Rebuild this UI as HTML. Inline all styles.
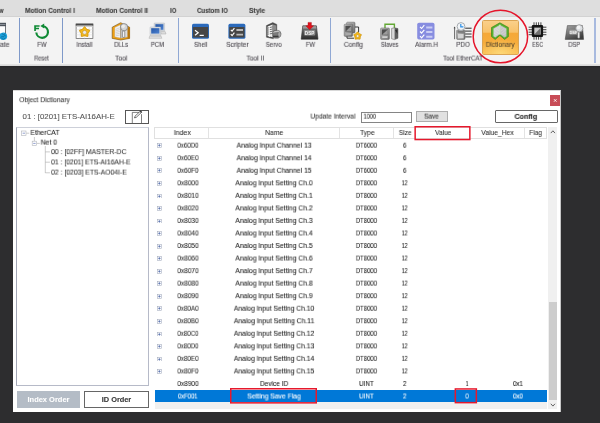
<!DOCTYPE html>
<html>
<head>
<meta charset="utf-8">
<style>
*{margin:0;padding:0;box-sizing:border-box;}
html,body{width:600px;height:423px;overflow:hidden;background:#2d2d2f;}
body{font-family:"Liberation Sans",sans-serif;position:relative;color:#333;}
.abs{position:absolute;}
#tabs{left:0;top:0;width:600px;height:17px;background:#dedede;border-bottom:1px solid #d2d2d2;}
#ribbon{left:0;top:17px;width:600px;height:47px;background:#f3f3f3;}
#ribline{left:0;top:64px;width:600px;height:4px;background:linear-gradient(#e6e6e6 0,#d8d8d8 1.6px,#8a8a8a 2px,#28282a 2.2px,#28282a 3px,#2d2d2f 4px);}
.sep{position:absolute;top:18.3px;width:1.1px;height:45px;background:#7f99c9;}
#dlg{left:12.6px;top:90.4px;width:548.6px;height:321.7px;background:#fff;border-right:1px solid #c6c6c6;border-top:1px solid #d8d8d8;}
.t{position:absolute;-webkit-text-stroke:0.08px currentColor;white-space:pre;font-size:6.9px;line-height:8px;color:#333;transform-origin:50% 50%;will-change:transform;}
</style>
</head>
<body>
<div id="tabs" class="abs"></div><div id="ribbon" class="abs"></div><div id="ribline" class="abs"></div>
<div class="sep" style="left:19px"></div>
<div class="sep" style="left:61.8px"></div>
<div class="sep" style="left:177.9px;background:#90a8d4"></div>
<div class="sep" style="left:329.9px;background:#90a8d4"></div>
<div class="sep" style="left:594.4px;width:1.6px;background:#a8badf"></div>
<div class="abs" style="left:481.5px;top:19.6px;width:37.4px;height:35.1px;border:1px solid #dba553;border-radius:1.5px;background:radial-gradient(ellipse 70% 45% at 50% 100%,#fdd877 0%,rgba(253,216,119,0) 100%),linear-gradient(#fad08a 0%,#f8c26a 34%,#f5a838 37%,#f6ad3d 70%,#f8b84a 100%);"></div>
<svg class="abs" style="left:0;top:0;width:600px;height:66px;will-change:transform" viewBox="0 0 600 66">
<defs>
<linearGradient id="gGray" x1="0" y1="0" x2="0" y2="1"><stop offset="0" stop-color="#7e7e7e"/><stop offset="1" stop-color="#2c2c2c"/></linearGradient>
<linearGradient id="gGray2" x1="0" y1="0" x2="1" y2="1"><stop offset="0" stop-color="#c8c8c8"/><stop offset="1" stop-color="#6a6a6a"/></linearGradient>
<linearGradient id="gBlue" x1="0" y1="0" x2="1" y2="1"><stop offset="0" stop-color="#2457a8"/><stop offset="1" stop-color="#4f82cf"/></linearGradient>
<linearGradient id="gOr" x1="0" y1="0" x2="0" y2="1"><stop offset="0" stop-color="#f3a83a"/><stop offset="1" stop-color="#d98512"/></linearGradient>
<linearGradient id="gGray3" x1="0" y1="0" x2="0.6" y2="1"><stop offset="0" stop-color="#a6a6a6"/><stop offset="1" stop-color="#3e3e3e"/></linearGradient>
</defs>
<!-- partial update icon -->
<g>
<rect x="-6" y="23.2" width="11.6" height="11" fill="#fdfdfd" stroke="#4d535b" stroke-width="0.8"/>
<rect x="-6" y="23" width="12" height="3.2" fill="#4d535b"/>
<rect x="-6" y="24.2" width="11.4" height="0.8" fill="#9aa0a8"/>
<circle cx="3.3" cy="36.2" r="3.8" fill="#1b9fd9"/>
<path d="M0.6 37.6l1.6-1.2 1 0.8 1.2-1.6 1.6 0.4M2 33.6l1.4 1 1.8-0.8M1.6 38.6l2 0.6 2-1.4" fill="none" stroke="#0c6690" stroke-width="0.7"/>
</g>
<!-- FW reset -->
<path d="M43.1 26.2A5.85 5.85 0 1 1 36.3 32.5" fill="none" stroke="#0f8a35" stroke-width="2.15"/>
<path d="M40.3 26.1l3.9-2.7v5.2z" fill="#0f8a35"/>
<path d="M34.2 25.2h5.4v1.5h-3.7v1.1h3.1v1.4h-3.1v1.8h-1.7z" fill="#0f8a35"/>
<!-- Install -->
<g>
<rect x="76.1" y="24" width="16.8" height="14.6" fill="#fcfcfc" stroke="#5a5a5a" stroke-width="0.7"/>
<rect x="75.8" y="23.7" width="17.4" height="2" fill="#4a4a4a"/>
<rect x="76.4" y="25.7" width="16.2" height="1.3" fill="#d0d0d0"/>
<path d="M76.4 29.6h16.2M76.4 32.2h16.2M76.4 34.8h16.2M80 27v11.4M84.6 27v11.4M89.2 27v11.4" stroke="#dcdcdc" stroke-width="0.5"/>
<path d="M84.60 27.50L86.30 29.75L88.97 30.68L87.36 33.00L87.30 35.82L84.60 35.00L81.90 35.82L81.84 33.00L80.23 30.68L82.90 29.75z" fill="#f5b91e" stroke="#f5b91e" stroke-width="2" stroke-linejoin="round"/>
<path d="M84.60 27.50L86.30 29.75L88.97 30.68L87.36 33.00L87.30 35.82L84.60 35.00L81.90 35.82L81.84 33.00L80.23 30.68L82.90 29.75z" fill="none" stroke="#c48d0c" stroke-width="0.5" stroke-linejoin="round" transform="translate(84.6 32.1) scale(1.2) translate(-84.6 -32.1)"/>
<circle cx="84.6" cy="32.4" r="2" fill="#e9e9ee" stroke="#b98a14" stroke-width="0.5"/>
</g>
<!-- DLLs -->
<g>
<path d="M112.2 27.2l8.5-4.5 8.9 4.5v11.2l-8.9 1.6-8.5-1.6z" fill="#f0a112" stroke="#6e4c12" stroke-width="0.6" stroke-linejoin="round"/>
<path d="M127.6 27.4l2 -0.2v11.2l-2 0.4z" fill="#b97509"/>
<path d="M114.8 27.6l5.8-2.9v13.4l-5.8-1.3z" fill="#f2f2f2" stroke="#a0a0a0" stroke-width="0.3"/>
<path d="M121 24.7l6.4 2.9v9.4l-6.4 1.3z" fill="#e2e2e2" stroke="#909090" stroke-width="0.3"/>
<path d="M115.6 29.4l4.2-1.6M115.6 31l4.2-1.4M115.6 32.6l4.2-1.2M115.6 34.2l4.2-1M115.6 35.8l4.2-0.8" stroke="#b4b4b4" stroke-width="0.5"/>
<path d="M120.8 24.6v13.6" stroke="#777" stroke-width="0.5"/>
<rect x="122.4" y="31" width="2.4" height="6.4" rx="0.6" fill="#f4f4f4" stroke="#555" stroke-width="0.6"/>
<circle cx="124.1" cy="27.2" r="3.6" fill="#d3d5d7" stroke="#7d7d7d" stroke-width="0.8"/>
<circle cx="123.2" cy="26.2" r="1.8" fill="#f1f1f1" opacity="0.8"/>
</g>
<!-- PCM -->
<g>
<rect x="154.2" y="23" width="10.4" height="8" rx="0.5" fill="#d3d8dd" stroke="#a9afb6" stroke-width="0.4"/>
<rect x="155.4" y="24.2" width="8" height="5.6" fill="url(#gBlue)"/>
<path d="M160.6 31.6h4.6l0.8 2.4h-5z" fill="#dedede" stroke="#9a9a9a" stroke-width="0.4"/>
<rect x="150" y="27" width="10.6" height="7.8" rx="0.5" fill="#dde1e5" stroke="#a9afb6" stroke-width="0.4"/>
<rect x="151.2" y="28.2" width="8.2" height="5.4" fill="url(#gBlue)"/>
<path d="M150 35.3h10.8l1 3h-12.8z" fill="#e3e3e3" stroke="#9a9a9a" stroke-width="0.4"/>
<path d="M150.4 36.6h10.6" stroke="#b8b8b8" stroke-width="0.5"/>
</g>
<!-- Shell -->
<g>
<rect x="192" y="23.8" width="17" height="15" rx="1.6" fill="#2b6abb"/>
<rect x="192.9" y="26.9" width="15.2" height="10.7" rx="0.5" fill="#464646"/>
<path d="M195 30.2l3.2 2.5-3.2 2.5" fill="none" stroke="#fff" stroke-width="1.2"/>
<path d="M199.6 35.4h4.2" stroke="#fff" stroke-width="1.2"/>
</g>
<!-- Scripter -->
<g>
<rect x="228.4" y="23.8" width="17" height="15" rx="1.6" fill="#2b6abb"/>
<rect x="229.3" y="26.9" width="15.2" height="10.7" rx="0.5" fill="#464646"/>
<path d="M230.8 29.8l1.3 1.4 2.3-3M230.8 34.2l1.3 1.4 2.3-3" fill="none" stroke="#fff" stroke-width="1.1"/>
<path d="M236.4 30h6.6M236.4 34.6h6.6" stroke="#b9b9b9" stroke-width="1.9"/>
</g>
<!-- Servo -->
<g>
<path d="M266.4 25.6l6.4-3 4 1.8v6.4l-3.4 1.4v6.6l-7-1.6z" fill="#4e4e4e" stroke="#3a3a3a" stroke-width="0.4"/>
<path d="M267.6 26.6l5-2v12.6l-5-1.2z" fill="#efefef"/>
<path d="M272.8 24.6l3.4 1v5l-3.4 1.4z" fill="#8c8c8c"/>
<path d="M267.6 28.2l5-1.4M267.6 30.2l5-1.2M267.6 32.2l5-1M267.6 34.2l5-0.8" stroke="#555" stroke-width="0.8"/>
<path d="M269.4 26v11" stroke="#fff" stroke-width="0.9" opacity="0.85"/>
<path d="M272.8 32.4q0-1.6 2-2h3.4q2.6 0.4 2.8 3.4t-2.8 4.4h-3.4q-2-0.4-2-2z" fill="#7c7c7c" stroke="#444" stroke-width="0.4"/>
<path d="M273.2 32q1.8-1.4 5-1.2q1.6 0.4 2 1.4q-3.6-0.6-7 0.6z" fill="#c4c4c4"/>
<ellipse cx="279.4" cy="34.4" rx="1.5" ry="2.6" fill="#a8a8a8" stroke="#555" stroke-width="0.3"/>
<path d="M273 36.4h5.4" stroke="#3c3c3c" stroke-width="1.4"/>
</g>
<!-- FW DSP -->
<g>
<path d="M302.8 25.8h13.6l1.6 13.4h-16.8z" fill="url(#gGray)" stroke="#2e2e2e" stroke-width="0.6"/>
<path d="M303.2 26.2h12.8l0.3 2.2h-13.4z" fill="#9c9c9c"/>
<rect x="304" y="30" width="11.2" height="5.6" rx="1" fill="#8b8b8b"/>
<text x="309.6" y="34.5" font-family="Liberation Sans, sans-serif" font-size="4.6" font-weight="bold" fill="#f4f4f4" text-anchor="middle">DSP</text>
<path d="M308 22.4h3.4v3.4h2.2l-3.9 3.9-3.9-3.9h2.2z" fill="#e2121c" stroke="#a50c13" stroke-width="0.4"/>
</g>
<!-- Config -->
<g>
<rect x="346.6" y="22.2" width="8.4" height="10.8" rx="0.9" fill="url(#gGray2)" stroke="#5a5a5a" stroke-width="0.5"/>
<rect x="344.2" y="24.2" width="8.4" height="12.2" rx="0.9" fill="url(#gGray2)" stroke="#5a5a5a" stroke-width="0.5"/>
<rect x="345.4" y="25.8" width="6" height="6" fill="#4e4e4e"/>
<path d="M345.6 31.6l5.6-5.6v5.6z" fill="#9a9a9a"/>
<rect x="345.6" y="33" width="5.6" height="2.2" fill="#a9a9a9"/>
<path d="M355 27h3.6v5.4M347 36.4v1.8h7" fill="none" stroke="#222" stroke-width="0.9"/>
<path d="M357.60 32.60L358.89 34.12L360.74 34.88L359.69 36.58L359.54 38.57L357.60 38.10L355.66 38.57L355.51 36.58L354.46 34.88L356.31 34.12z" fill="#f5b91e" stroke="#f5b91e" stroke-width="1.6" stroke-linejoin="round"/>
<path d="M357.60 31.80L359.30 33.55L361.50 34.63L360.36 36.80L360.01 39.22L357.60 38.80L355.19 39.22L354.84 36.80L353.70 34.63L355.90 33.55z" fill="none" stroke="#b9850c" stroke-width="0.5" stroke-linejoin="round"/>
<circle cx="357.6" cy="36.1" r="1.4" fill="#f3f0e6" stroke="#a87a10" stroke-width="0.4"/>
</g>
<!-- Slaves -->
<g>
<path d="M385 28.4v-4.2h9.4v4.2" fill="none" stroke="#63a834" stroke-width="1.4"/>
<rect x="380.6" y="28" width="8.8" height="11.4" rx="0.9" fill="url(#gGray2)" stroke="#5a5a5a" stroke-width="0.5"/>
<rect x="381.8" y="29.4" width="6.2" height="5.6" fill="#4e4e4e"/>
<path d="M382 34.8l5.8-5.2v5.2z" fill="#9c9c9c"/>
<rect x="382" y="36" width="5.8" height="2.2" fill="#cfcfcf" stroke="#777" stroke-width="0.3"/>
<path d="M391.6 28.4l3-0.6 3.4 0.8v9.6l-3.4 1.4-3-0.8z" fill="#d9d9d9" stroke="#5a5a5a" stroke-width="0.5"/>
<path d="M394.6 27.8l3.4 0.8v9.6l-3.4 1.4z" fill="#5e5e5e"/>
<path d="M395 30l2.4 4v-4.6z" fill="#2e2e2e"/>
</g>
<!-- Alarm.H -->
<g>
<rect x="417.2" y="22.8" width="17.3" height="16.7" rx="1.8" fill="#878de0"/>
<path d="M420 26.8l1.6 1.7 2.7-3.3M420 31.5l1.6 1.7 2.7-3.3M420 36.2l1.6 1.7 2.7-3.3" fill="none" stroke="#fff" stroke-width="1.1"/>
<path d="M426.2 27.4h6.2M426.2 32.1h6.2M426.2 36.8h6.2" stroke="#c9ccf4" stroke-width="2"/>
</g>
<!-- PDO -->
<g>
<path d="M454.6 27.6v11.6" stroke="#444" stroke-width="0.8"/>
<path d="M453.6 28.2l1-1.8 1 1.8z" fill="#444"/>
<rect x="456.6" y="30" width="8.4" height="9.4" rx="0.8" fill="url(#gGray2)" stroke="#5c5c5c" stroke-width="0.5"/>
<rect x="457.4" y="30.4" width="6.8" height="2.4" fill="#7a7a7a"/>
<rect x="458" y="34" width="5.6" height="4.4" fill="#d4d4d4"/>
<path d="M465.2 28.2h6.4M465.2 31.1h6.4M465.2 34h6.4M465.2 36.9h6.4" stroke="#2f2f2f" stroke-width="1"/>
<circle cx="461" cy="26.5" r="3.9" fill="#f2f5f8" stroke="#a4a9ae" stroke-width="1"/>
<path d="M460.8 24v2.8h2.6" fill="none" stroke="#2a8fe8" stroke-width="1.2"/>
</g>
<!-- Dictionary -->
<g>
<path d="M491.5 27.5L499.9 22.8L508.4 27.5V36.6L504.6 39.4L499.9 35.4L495.2 39.4L491.5 36.6Z" fill="#58b42c" stroke="#2f7a1c" stroke-width="0.6" stroke-linejoin="round"/>
<path d="M493.4 28.4L499.6 24.9V34.2L495.3 37.6L493.4 36.2Z" fill="#c9c9c9"/>
<path d="M500.2 24.9L506.5 28.4V36.2L504.5 37.6L500.2 34.2Z" fill="#bdbdbd"/>
<path d="M494 29.6l5-2.6M494 31l5-2.4M494 32.4l5-2.2M494 33.8l5-2M494.4 35.2l4.4-1.8" stroke="#f0f0f0" stroke-width="0.5"/>
<path d="M505.9 29.6l-5-2.6M505.9 31l-5-2.4M505.9 32.4l-5-2.2M505.9 33.8l-5-2M505.5 35.2l-4.4-1.8" stroke="#e4e4e4" stroke-width="0.5"/>
<path d="M499.9 24.6v10" stroke="#fafafa" stroke-width="0.9"/>
</g>
<!-- ESC -->
<g>
<rect x="531.8" y="25.1" width="11.3" height="11.8" rx="1.2" fill="#151515"/>
<rect x="534.3" y="27.6" width="6.6" height="6.8" fill="#c9c9c9"/>
<path d="M534.5 34.2l6.2-6.4v6.4z" fill="#6f6f6f"/>
<g stroke="#151515" stroke-width="0.8">
<path d="M534 22.3v3M536.3 22.3v3M538.6 22.3v3M540.9 22.3v3M534 36.7v3M536.3 36.7v3M538.6 36.7v3M540.9 36.7v3"/>
<path d="M528.6 27.2h3.4M528.6 29.7h3.4M528.6 32.2h3.4M528.6 34.7h3.4M543 27.2h3.4M543 29.7h3.4M543 32.2h3.4M543 34.7h3.4"/>
</g>
</g>
<!-- DSP -->
<g>
<path d="M567.4 25.6h15l1.2 13.8h-18.4z" fill="url(#gGray3)" stroke="#3a3a3a" stroke-width="0.5"/>
<rect x="569.6" y="29.8" width="8" height="4.6" rx="0.6" fill="#a4a4a4"/>
<text x="573.6" y="33.7" font-family="Liberation Sans, sans-serif" font-size="4" font-weight="bold" fill="#f4f4f4" text-anchor="middle">DSP</text>
<rect x="577.6" y="32" width="2.2" height="6.2" rx="0.6" fill="#eeeeee" stroke="#5a5a5a" stroke-width="0.5"/>
<circle cx="579.3" cy="28.3" r="3.6" fill="#dcdfe2" stroke="#8b8b8b" stroke-width="0.8"/>
<circle cx="578.5" cy="27.4" r="1.8" fill="#f6f6f6" opacity="0.85"/>
</g>
</svg>

<svg class="abs" style="left:470px;top:8px;width:62px;height:58px" viewBox="0 0 62 58"><ellipse cx="30.4" cy="28.5" rx="27.2" ry="26.3" fill="none" stroke="#e5142a" stroke-width="1.5"/></svg>
<div id="dlg" class="abs"></div>
<div class="abs" style="left:125.1px;top:110.1px;width:24px;height:13.6px;border:1px solid #565656;background:#fff"></div>
<svg class="abs" style="left:125px;top:110px;width:24px;height:14px" viewBox="125 110 24 14"><path d="M139.4 112.4h-7.1v10.6M141.5 114.2v8.8" fill="none" stroke="#555" stroke-width="0.75"/><path d="M134.5 117.9l0.5-1.7 5.6-5.3 1.2 1.2-5.6 5.3z" fill="#fff" stroke="#333" stroke-width="0.7" stroke-linejoin="round"/><path d="M140.2 111.2l1.3 1.3" stroke="#333" stroke-width="1.3"/></svg>
<div class="abs" style="left:550px;top:95px;width:10.3px;height:10.5px;background:#c84c57"></div>
<svg class="abs" style="left:550px;top:95px;width:10.5px;height:10.5px" viewBox="0 0 10.5 10.5"><path d="M4 4.2l2.5 2.5M6.5 4.2l-2.5 2.5" stroke="#fff" stroke-width="0.9"/></svg>
<div class="abs" style="left:361px;top:111.5px;width:51.4px;height:11px;border:1px solid #858585;background:#fff"></div>
<div class="abs" style="left:416.3px;top:111.3px;width:31.5px;height:10.8px;border:1px solid #adadad;background:#e1e1e1"></div>
<div class="abs" style="left:495px;top:110px;width:62.5px;height:13.4px;border:1px solid #676767;border-radius:1px;background:#fff"></div>
<div class="abs" style="left:16.2px;top:126.6px;width:132.6px;height:259.8px;border:1px solid #b6bac8;border-left-color:#a3a7b6;border-top-color:#cdd0d9;background:#fff"></div>
<svg class="abs" style="left:16px;top:126px;width:133px;height:60px" viewBox="16 126 133 60"><g fill="none" stroke="#a8a8a8" stroke-width="0.6"><path d="M26.2 133.2h3M34.4 137v4M36.8 143.4h3M45.3 146v27M45.3 151.9h4.6M45.3 162.2h4.6M45.3 172.8h4.6"/><rect x="21.6" y="131" width="4.4" height="4.4" fill="#fff" stroke="#b0b3ba"/><path d="M22.6 133.2h2.4" stroke="#4a62b4"/><rect x="32.2" y="141.2" width="4.4" height="4.4" fill="#fff" stroke="#b0b3ba"/><path d="M33.2 143.4h2.4" stroke="#4a62b4"/></g></svg>
<div class="abs" style="left:16.8px;top:391.2px;width:63.2px;height:16.4px;background:#b4bcc6"></div>
<div class="abs" style="left:84.2px;top:390.5px;width:64.6px;height:17.8px;border:1px solid #666;background:#fff"></div>
<div class="abs" style="left:154.3px;top:126.8px;width:392.6px;height:11.8px;border:1px solid #e0e0e0;background:#fff"></div>
<div class="abs" style="left:207.9px;top:128px;width:1px;height:9.6px;background:#e3e3e3"></div>
<div class="abs" style="left:339.1px;top:128px;width:1px;height:9.6px;background:#e3e3e3"></div>
<div class="abs" style="left:392.9px;top:128px;width:1px;height:9.6px;background:#e3e3e3"></div>
<div class="abs" style="left:523.8px;top:128px;width:1px;height:9.6px;background:#e3e3e3"></div>
<div class="abs" style="left:548px;top:126.8px;width:9.1px;height:282px;background:#f0f0f0"></div>
<div class="abs" style="left:549px;top:302.3px;width:8.1px;height:97.5px;background:#cdcdcd"></div>
<svg class="abs" style="left:548px;top:128px;width:9px;height:8px" viewBox="0 0 9 8"><path d="M2.8 5.1l2.1-2.3 2.1 2.3" fill="none" stroke="#505050" stroke-width="0.9"/></svg>
<svg class="abs" style="left:548px;top:400.5px;width:9px;height:8px" viewBox="0 0 9 8"><path d="M2.8 2.8l2.1 2.3 2.1-2.3" fill="none" stroke="#505050" stroke-width="0.9"/></svg>
<div class="abs" style="left:154.5px;top:402px;width:392.3px;height:6.7px;background:#f0f0f0"></div>
<svg class="abs" style="left:157.2px;top:143.40px;width:4.8px;height:4.8px" viewBox="0 0 5 5"><rect x="0.3" y="0.3" width="4.4" height="4.4" fill="#fff" stroke="#a3abbe" stroke-width="0.6"/><path d="M1.2 2.5h2.6M2.5 1.2v2.6" stroke="#4560a4" stroke-width="0.7"/></svg>
<svg class="abs" style="left:157.2px;top:155.94px;width:4.8px;height:4.8px" viewBox="0 0 5 5"><rect x="0.3" y="0.3" width="4.4" height="4.4" fill="#fff" stroke="#a3abbe" stroke-width="0.6"/><path d="M1.2 2.5h2.6M2.5 1.2v2.6" stroke="#4560a4" stroke-width="0.7"/></svg>
<svg class="abs" style="left:157.2px;top:168.48px;width:4.8px;height:4.8px" viewBox="0 0 5 5"><rect x="0.3" y="0.3" width="4.4" height="4.4" fill="#fff" stroke="#a3abbe" stroke-width="0.6"/><path d="M1.2 2.5h2.6M2.5 1.2v2.6" stroke="#4560a4" stroke-width="0.7"/></svg>
<svg class="abs" style="left:157.2px;top:181.02px;width:4.8px;height:4.8px" viewBox="0 0 5 5"><rect x="0.3" y="0.3" width="4.4" height="4.4" fill="#fff" stroke="#a3abbe" stroke-width="0.6"/><path d="M1.2 2.5h2.6M2.5 1.2v2.6" stroke="#4560a4" stroke-width="0.7"/></svg>
<svg class="abs" style="left:157.2px;top:193.56px;width:4.8px;height:4.8px" viewBox="0 0 5 5"><rect x="0.3" y="0.3" width="4.4" height="4.4" fill="#fff" stroke="#a3abbe" stroke-width="0.6"/><path d="M1.2 2.5h2.6M2.5 1.2v2.6" stroke="#4560a4" stroke-width="0.7"/></svg>
<svg class="abs" style="left:157.2px;top:206.10px;width:4.8px;height:4.8px" viewBox="0 0 5 5"><rect x="0.3" y="0.3" width="4.4" height="4.4" fill="#fff" stroke="#a3abbe" stroke-width="0.6"/><path d="M1.2 2.5h2.6M2.5 1.2v2.6" stroke="#4560a4" stroke-width="0.7"/></svg>
<svg class="abs" style="left:157.2px;top:218.64px;width:4.8px;height:4.8px" viewBox="0 0 5 5"><rect x="0.3" y="0.3" width="4.4" height="4.4" fill="#fff" stroke="#a3abbe" stroke-width="0.6"/><path d="M1.2 2.5h2.6M2.5 1.2v2.6" stroke="#4560a4" stroke-width="0.7"/></svg>
<svg class="abs" style="left:157.2px;top:231.18px;width:4.8px;height:4.8px" viewBox="0 0 5 5"><rect x="0.3" y="0.3" width="4.4" height="4.4" fill="#fff" stroke="#a3abbe" stroke-width="0.6"/><path d="M1.2 2.5h2.6M2.5 1.2v2.6" stroke="#4560a4" stroke-width="0.7"/></svg>
<svg class="abs" style="left:157.2px;top:243.72px;width:4.8px;height:4.8px" viewBox="0 0 5 5"><rect x="0.3" y="0.3" width="4.4" height="4.4" fill="#fff" stroke="#a3abbe" stroke-width="0.6"/><path d="M1.2 2.5h2.6M2.5 1.2v2.6" stroke="#4560a4" stroke-width="0.7"/></svg>
<svg class="abs" style="left:157.2px;top:256.26px;width:4.8px;height:4.8px" viewBox="0 0 5 5"><rect x="0.3" y="0.3" width="4.4" height="4.4" fill="#fff" stroke="#a3abbe" stroke-width="0.6"/><path d="M1.2 2.5h2.6M2.5 1.2v2.6" stroke="#4560a4" stroke-width="0.7"/></svg>
<svg class="abs" style="left:157.2px;top:268.80px;width:4.8px;height:4.8px" viewBox="0 0 5 5"><rect x="0.3" y="0.3" width="4.4" height="4.4" fill="#fff" stroke="#a3abbe" stroke-width="0.6"/><path d="M1.2 2.5h2.6M2.5 1.2v2.6" stroke="#4560a4" stroke-width="0.7"/></svg>
<svg class="abs" style="left:157.2px;top:281.34px;width:4.8px;height:4.8px" viewBox="0 0 5 5"><rect x="0.3" y="0.3" width="4.4" height="4.4" fill="#fff" stroke="#a3abbe" stroke-width="0.6"/><path d="M1.2 2.5h2.6M2.5 1.2v2.6" stroke="#4560a4" stroke-width="0.7"/></svg>
<svg class="abs" style="left:157.2px;top:293.88px;width:4.8px;height:4.8px" viewBox="0 0 5 5"><rect x="0.3" y="0.3" width="4.4" height="4.4" fill="#fff" stroke="#a3abbe" stroke-width="0.6"/><path d="M1.2 2.5h2.6M2.5 1.2v2.6" stroke="#4560a4" stroke-width="0.7"/></svg>
<svg class="abs" style="left:157.2px;top:306.42px;width:4.8px;height:4.8px" viewBox="0 0 5 5"><rect x="0.3" y="0.3" width="4.4" height="4.4" fill="#fff" stroke="#a3abbe" stroke-width="0.6"/><path d="M1.2 2.5h2.6M2.5 1.2v2.6" stroke="#4560a4" stroke-width="0.7"/></svg>
<svg class="abs" style="left:157.2px;top:318.96px;width:4.8px;height:4.8px" viewBox="0 0 5 5"><rect x="0.3" y="0.3" width="4.4" height="4.4" fill="#fff" stroke="#a3abbe" stroke-width="0.6"/><path d="M1.2 2.5h2.6M2.5 1.2v2.6" stroke="#4560a4" stroke-width="0.7"/></svg>
<svg class="abs" style="left:157.2px;top:331.50px;width:4.8px;height:4.8px" viewBox="0 0 5 5"><rect x="0.3" y="0.3" width="4.4" height="4.4" fill="#fff" stroke="#a3abbe" stroke-width="0.6"/><path d="M1.2 2.5h2.6M2.5 1.2v2.6" stroke="#4560a4" stroke-width="0.7"/></svg>
<svg class="abs" style="left:157.2px;top:344.04px;width:4.8px;height:4.8px" viewBox="0 0 5 5"><rect x="0.3" y="0.3" width="4.4" height="4.4" fill="#fff" stroke="#a3abbe" stroke-width="0.6"/><path d="M1.2 2.5h2.6M2.5 1.2v2.6" stroke="#4560a4" stroke-width="0.7"/></svg>
<svg class="abs" style="left:157.2px;top:356.58px;width:4.8px;height:4.8px" viewBox="0 0 5 5"><rect x="0.3" y="0.3" width="4.4" height="4.4" fill="#fff" stroke="#a3abbe" stroke-width="0.6"/><path d="M1.2 2.5h2.6M2.5 1.2v2.6" stroke="#4560a4" stroke-width="0.7"/></svg>
<svg class="abs" style="left:157.2px;top:369.12px;width:4.8px;height:4.8px" viewBox="0 0 5 5"><rect x="0.3" y="0.3" width="4.4" height="4.4" fill="#fff" stroke="#a3abbe" stroke-width="0.6"/><path d="M1.2 2.5h2.6M2.5 1.2v2.6" stroke="#4560a4" stroke-width="0.7"/></svg>
<div class="abs" style="left:154.5px;top:389.9px;width:392.3px;height:12.2px;background:#0078d7"></div>
<div class="t" style="left:-11px;top:6px;font-size:6.9px;font-weight:bold;color:#3a3a3a;transform:translate(0.20px,0.93px) scale(0.833,1);">View</div>
<div class="t" style="left:23px;top:6px;font-size:6.9px;font-weight:bold;color:#3a3a3a;transform:translate(0.56px,0.93px) scale(0.945,1);">Motion Control I</div>
<div class="t" style="left:94px;top:6px;font-size:6.9px;font-weight:bold;color:#3a3a3a;transform:translate(0.60px,0.93px) scale(0.949,1);">Motion Control II</div>
<div class="t" style="left:169px;top:6px;font-size:6.9px;font-weight:bold;color:#3a3a3a;transform:translate(0.56px,0.93px) scale(0.879,1);">IO</div>
<div class="t" style="left:195px;top:6px;font-size:6.9px;font-weight:bold;color:#3a3a3a;transform:translate(0.06px,0.93px) scale(0.889,1);">Custom IO</div>
<div class="t" style="left:248px;top:6px;font-size:6.9px;font-weight:bold;color:#3a3a3a;transform:translate(0.75px,0.93px) scale(0.970,1);">Style</div>
<div class="t" style="left:-13px;top:41px;font-size:6.9px;color:#48454c;transform:translate(0.27px,0.03px) scale(0.998,1.05);">Update</div>
<div class="t" style="left:36px;top:41px;font-size:6.9px;color:#48454c;transform:translate(0.54px,0.03px) scale(0.858,1.05);">FW</div>
<div class="t" style="left:75px;top:41px;font-size:6.9px;color:#48454c;transform:translate(0.39px,0.03px) scale(0.888,1.05);">Install</div>
<div class="t" style="left:113px;top:41px;font-size:6.9px;color:#48454c;transform:translate(0.05px,0.03px) scale(0.857,1.05);">DLLs</div>
<div class="t" style="left:149px;top:41px;font-size:6.9px;color:#48454c;transform:translate(0.83px,0.03px) scale(0.874,1.05);">PCM</div>
<div class="t" style="left:193px;top:41px;font-size:6.9px;color:#48454c;transform:translate(0.13px,0.03px) scale(0.867,1.05);">Shell</div>
<div class="t" style="left:225px;top:41px;font-size:6.9px;color:#48454c;transform:translate(0.61px,0.03px) scale(0.942,1.05);">Scripter</div>
<div class="t" style="left:264px;top:41px;font-size:6.9px;color:#48454c;transform:translate(0.69px,0.03px) scale(0.882,1.05);">Servo</div>
<div class="t" style="left:305px;top:41px;font-size:6.9px;color:#48454c;transform:translate(0.04px,0.03px) scale(0.858,1.05);">FW</div>
<div class="t" style="left:343px;top:41px;font-size:6.9px;color:#48454c;transform:translate(0.43px,0.03px) scale(0.963,1.05);">Config</div>
<div class="t" style="left:379px;top:41px;font-size:6.9px;color:#48454c;transform:translate(0.24px,0.03px) scale(0.845,1.05);">Slaves</div>
<div class="t" style="left:414px;top:41px;font-size:6.9px;color:#48454c;transform:translate(0.04px,0.03px) scale(0.923,1.05);">Alarm.H</div>
<div class="t" style="left:455px;top:41px;font-size:6.9px;color:#48454c;transform:translate(0.62px,0.03px) scale(0.923,1.05);">PDO</div>
<div class="t" style="left:484px;top:41px;font-size:6.9px;color:#57462e;transform:translate(0.86px,0.03px) scale(0.939,1.05);">Dictionary</div>
<div class="t" style="left:530px;top:41px;font-size:6.9px;color:#48454c;transform:translate(0.61px,0.03px) scale(0.761,1.05);">ESC</div>
<div class="t" style="left:567px;top:41px;font-size:6.9px;color:#48454c;transform:translate(0.11px,0.03px) scale(0.839,1.05);">DSP</div>
<div class="t" style="left:32px;top:54px;font-size:6.9px;color:#48454c;transform:translate(0.49px,0.73px) scale(0.804,1.05);">Reset</div>
<div class="t" style="left:114px;top:54px;font-size:6.9px;color:#48454c;transform:translate(0.87px,0.73px) scale(0.972,1.05);">Tool</div>
<div class="t" style="left:246px;top:54px;font-size:6.9px;color:#48454c;transform:translate(0.20px,0.73px) scale(0.978,1.05);">Tool II</div>
<div class="t" style="left:440px;top:54px;font-size:6.9px;color:#48454c;transform:translate(0.82px,0.73px) scale(0.902,1.05);">Tool EtherCAT</div>
<div class="t" style="left:17px;top:96px;font-size:7.0px;transform:translate(0.85px,0.13px) scale(0.948,1);">Object Dictionary</div>
<div class="t" style="left:24px;top:112px;font-size:7.5px;color:#555;transform:translate(0.62px,0.82px) scale(1.048,1);">01 : [0201] ETS-AI16AH-E</div>
<div class="t" style="left:307px;top:112px;font-size:7.4px;transform:translate(0.91px,0.83px) scale(0.897,1.05);">Update Interval</div>
<div class="t" style="left:361px;top:112px;font-size:7.2px;transform:translate(0.79px,0.73px) scale(0.774,1);">1000</div>
<div class="t" style="left:423px;top:112px;font-size:7.4px;transform:translate(0.07px,0.83px) scale(0.866,1.05);">Save</div>
<div class="t" style="left:514px;top:112px;font-size:7.3px;font-weight:bold;color:#222;transform:translate(0.25px,0.93px) scale(0.982,1);">Config</div>
<div class="t" style="left:28px;top:129px;font-size:7.4px;color:#222;transform:translate(0.93px,0.13px) scale(0.908,1.05);">EtherCAT</div>
<div class="t" style="left:40px;top:138px;font-size:7.4px;color:#222;transform:translate(0.06px,0.83px) scale(0.927,1.05);">Net 0</div>
<div class="t" style="left:47px;top:148px;font-size:7.4px;transform:translate(0.89px,0.33px) scale(0.921,1.05);">00 : [02FF] MASTER-DC</div>
<div class="t" style="left:47px;top:158px;font-size:7.4px;transform:translate(0.51px,0.63px) scale(0.917,1.05);">01 : [0201] ETS-AI16AH-E</div>
<div class="t" style="left:47px;top:168px;font-size:7.4px;transform:translate(0.87px,0.83px) scale(0.921,1.05);">02 : [0203] ETS-AO04I-E</div>
<div class="t" style="left:28px;top:396px;font-size:7.3px;font-weight:bold;color:#fff;transform:translate(0.01px,0.03px) scale(1.025,1);">Index Order</div>
<div class="t" style="left:101px;top:396px;font-size:7.3px;font-weight:bold;transform:translate(0.90px,0.03px) scale(1.010,1);">ID Order</div>
<div class="t" style="left:173px;top:129px;font-size:7.4px;transform:translate(0.25px,0.23px) scale(0.939,1.05);">Index</div>
<div class="t" style="left:264px;top:129px;font-size:7.4px;transform:translate(0.33px,0.23px) scale(0.927,1.05);">Name</div>
<div class="t" style="left:359px;top:129px;font-size:7.4px;transform:translate(0.28px,0.23px) scale(0.916,1.05);">Type</div>
<div class="t" style="left:398px;top:129px;font-size:7.4px;transform:translate(0.00px,0.23px) scale(0.889,1.05);">Size</div>
<div class="t" style="left:434px;top:129px;font-size:7.4px;transform:translate(0.01px,0.23px) scale(0.887,1.05);">Value</div>
<div class="t" style="left:479px;top:129px;font-size:7.4px;transform:translate(0.67px,0.23px) scale(0.909,1.05);">Value_Hex</div>
<div class="t" style="left:528px;top:129px;font-size:7.4px;transform:translate(0.40px,0.23px) scale(0.889,1.05);">Flag</div>
<div class="t" style="left:175px;top:141px;font-size:7.4px;color:#2e2e2e;transform:translate(0.25px,0.93px) scale(0.831,1.05);">0x60D0</div>
<div class="t" style="left:233px;top:141px;font-size:7.4px;color:#1c1c1c;transform:translate(0.37px,0.93px) scale(0.921,1.05);">Analog Input Channel 13</div>
<div class="t" style="left:353px;top:141px;font-size:7.4px;color:#1c1c1c;transform:translate(0.24px,0.93px) scale(0.805,1.05);">DT6000</div>
<div class="t" style="left:402px;top:141px;font-size:7.4px;color:#1c1c1c;transform:translate(0.64px,0.93px) scale(0.826,1.05);">6</div>
<div class="t" style="left:175px;top:154px;font-size:7.4px;color:#2e2e2e;transform:translate(0.45px,0.47px) scale(0.845,1.05);">0x60E0</div>
<div class="t" style="left:233px;top:154px;font-size:7.4px;color:#1c1c1c;transform:translate(0.37px,0.47px) scale(0.921,1.05);">Analog Input Channel 14</div>
<div class="t" style="left:353px;top:154px;font-size:7.4px;color:#1c1c1c;transform:translate(0.24px,0.47px) scale(0.805,1.05);">DT6000</div>
<div class="t" style="left:402px;top:154px;font-size:7.4px;color:#1c1c1c;transform:translate(0.64px,0.47px) scale(0.826,1.05);">6</div>
<div class="t" style="left:175px;top:167px;font-size:7.4px;color:#2e2e2e;transform:translate(0.66px,0.01px) scale(0.859,1.05);">0x60F0</div>
<div class="t" style="left:233px;top:167px;font-size:7.4px;color:#1c1c1c;transform:translate(0.37px,0.01px) scale(0.921,1.05);">Analog Input Channel 15</div>
<div class="t" style="left:353px;top:167px;font-size:7.4px;color:#1c1c1c;transform:translate(0.24px,0.01px) scale(0.805,1.05);">DT6000</div>
<div class="t" style="left:402px;top:167px;font-size:7.4px;color:#1c1c1c;transform:translate(0.64px,0.01px) scale(0.826,1.05);">6</div>
<div class="t" style="left:175px;top:179px;font-size:7.4px;color:#2e2e2e;transform:translate(0.86px,0.55px) scale(0.873,1.05);">0x8000</div>
<div class="t" style="left:231px;top:179px;font-size:7.4px;color:#1c1c1c;transform:translate(0.93px,0.55px) scale(0.919,1.05);">Analog Input Setting Ch.0</div>
<div class="t" style="left:353px;top:179px;font-size:7.4px;color:#1c1c1c;transform:translate(0.24px,0.55px) scale(0.805,1.05);">DT8000</div>
<div class="t" style="left:400px;top:179px;font-size:7.4px;color:#1c1c1c;transform:translate(0.58px,0.55px) scale(0.705,1.05);">12</div>
<div class="t" style="left:175px;top:192px;font-size:7.4px;color:#2e2e2e;transform:translate(0.86px,0.09px) scale(0.873,1.05);">0x8010</div>
<div class="t" style="left:231px;top:192px;font-size:7.4px;color:#1c1c1c;transform:translate(0.93px,0.09px) scale(0.919,1.05);">Analog Input Setting Ch.1</div>
<div class="t" style="left:353px;top:192px;font-size:7.4px;color:#1c1c1c;transform:translate(0.24px,0.09px) scale(0.805,1.05);">DT8000</div>
<div class="t" style="left:400px;top:192px;font-size:7.4px;color:#1c1c1c;transform:translate(0.58px,0.09px) scale(0.705,1.05);">12</div>
<div class="t" style="left:175px;top:204px;font-size:7.4px;color:#2e2e2e;transform:translate(0.86px,0.63px) scale(0.873,1.05);">0x8020</div>
<div class="t" style="left:231px;top:204px;font-size:7.4px;color:#1c1c1c;transform:translate(0.93px,0.63px) scale(0.919,1.05);">Analog Input Setting Ch.2</div>
<div class="t" style="left:353px;top:204px;font-size:7.4px;color:#1c1c1c;transform:translate(0.24px,0.63px) scale(0.805,1.05);">DT8000</div>
<div class="t" style="left:400px;top:204px;font-size:7.4px;color:#1c1c1c;transform:translate(0.58px,0.63px) scale(0.705,1.05);">12</div>
<div class="t" style="left:175px;top:217px;font-size:7.4px;color:#2e2e2e;transform:translate(0.86px,0.17px) scale(0.873,1.05);">0x8030</div>
<div class="t" style="left:231px;top:217px;font-size:7.4px;color:#1c1c1c;transform:translate(0.93px,0.17px) scale(0.919,1.05);">Analog Input Setting Ch.3</div>
<div class="t" style="left:353px;top:217px;font-size:7.4px;color:#1c1c1c;transform:translate(0.24px,0.17px) scale(0.805,1.05);">DT8000</div>
<div class="t" style="left:400px;top:217px;font-size:7.4px;color:#1c1c1c;transform:translate(0.58px,0.17px) scale(0.705,1.05);">12</div>
<div class="t" style="left:175px;top:229px;font-size:7.4px;color:#2e2e2e;transform:translate(0.86px,0.71px) scale(0.873,1.05);">0x8040</div>
<div class="t" style="left:231px;top:229px;font-size:7.4px;color:#1c1c1c;transform:translate(0.93px,0.71px) scale(0.919,1.05);">Analog Input Setting Ch.4</div>
<div class="t" style="left:353px;top:229px;font-size:7.4px;color:#1c1c1c;transform:translate(0.24px,0.71px) scale(0.805,1.05);">DT8000</div>
<div class="t" style="left:400px;top:229px;font-size:7.4px;color:#1c1c1c;transform:translate(0.58px,0.71px) scale(0.705,1.05);">12</div>
<div class="t" style="left:175px;top:242px;font-size:7.4px;color:#2e2e2e;transform:translate(0.86px,0.25px) scale(0.873,1.05);">0x8050</div>
<div class="t" style="left:231px;top:242px;font-size:7.4px;color:#1c1c1c;transform:translate(0.93px,0.25px) scale(0.919,1.05);">Analog Input Setting Ch.5</div>
<div class="t" style="left:353px;top:242px;font-size:7.4px;color:#1c1c1c;transform:translate(0.24px,0.25px) scale(0.805,1.05);">DT8000</div>
<div class="t" style="left:400px;top:242px;font-size:7.4px;color:#1c1c1c;transform:translate(0.58px,0.25px) scale(0.705,1.05);">12</div>
<div class="t" style="left:175px;top:254px;font-size:7.4px;color:#2e2e2e;transform:translate(0.86px,0.79px) scale(0.873,1.05);">0x8060</div>
<div class="t" style="left:231px;top:254px;font-size:7.4px;color:#1c1c1c;transform:translate(0.93px,0.79px) scale(0.919,1.05);">Analog Input Setting Ch.6</div>
<div class="t" style="left:353px;top:254px;font-size:7.4px;color:#1c1c1c;transform:translate(0.24px,0.79px) scale(0.805,1.05);">DT8000</div>
<div class="t" style="left:400px;top:254px;font-size:7.4px;color:#1c1c1c;transform:translate(0.58px,0.79px) scale(0.705,1.05);">12</div>
<div class="t" style="left:175px;top:267px;font-size:7.4px;color:#2e2e2e;transform:translate(0.86px,0.33px) scale(0.873,1.05);">0x8070</div>
<div class="t" style="left:231px;top:267px;font-size:7.4px;color:#1c1c1c;transform:translate(0.93px,0.33px) scale(0.919,1.05);">Analog Input Setting Ch.7</div>
<div class="t" style="left:353px;top:267px;font-size:7.4px;color:#1c1c1c;transform:translate(0.24px,0.33px) scale(0.805,1.05);">DT8000</div>
<div class="t" style="left:400px;top:267px;font-size:7.4px;color:#1c1c1c;transform:translate(0.58px,0.33px) scale(0.705,1.05);">12</div>
<div class="t" style="left:175px;top:279px;font-size:7.4px;color:#2e2e2e;transform:translate(0.86px,0.87px) scale(0.873,1.05);">0x8080</div>
<div class="t" style="left:231px;top:279px;font-size:7.4px;color:#1c1c1c;transform:translate(0.93px,0.87px) scale(0.919,1.05);">Analog Input Setting Ch.8</div>
<div class="t" style="left:353px;top:279px;font-size:7.4px;color:#1c1c1c;transform:translate(0.24px,0.87px) scale(0.805,1.05);">DT8000</div>
<div class="t" style="left:400px;top:279px;font-size:7.4px;color:#1c1c1c;transform:translate(0.58px,0.87px) scale(0.705,1.05);">12</div>
<div class="t" style="left:175px;top:292px;font-size:7.4px;color:#2e2e2e;transform:translate(0.86px,0.41px) scale(0.873,1.05);">0x8090</div>
<div class="t" style="left:231px;top:292px;font-size:7.4px;color:#1c1c1c;transform:translate(0.93px,0.41px) scale(0.919,1.05);">Analog Input Setting Ch.9</div>
<div class="t" style="left:353px;top:292px;font-size:7.4px;color:#1c1c1c;transform:translate(0.24px,0.41px) scale(0.805,1.05);">DT8000</div>
<div class="t" style="left:400px;top:292px;font-size:7.4px;color:#1c1c1c;transform:translate(0.58px,0.41px) scale(0.705,1.05);">12</div>
<div class="t" style="left:175px;top:304px;font-size:7.4px;color:#2e2e2e;transform:translate(0.45px,0.95px) scale(0.845,1.05);">0x80A0</div>
<div class="t" style="left:229px;top:304px;font-size:7.4px;color:#1c1c1c;transform:translate(0.87px,0.95px) scale(0.910,1.05);">Analog Input Setting Ch.10</div>
<div class="t" style="left:353px;top:304px;font-size:7.4px;color:#1c1c1c;transform:translate(0.24px,0.95px) scale(0.805,1.05);">DT8000</div>
<div class="t" style="left:400px;top:304px;font-size:7.4px;color:#1c1c1c;transform:translate(0.58px,0.95px) scale(0.705,1.05);">12</div>
<div class="t" style="left:175px;top:317px;font-size:7.4px;color:#2e2e2e;transform:translate(0.45px,0.49px) scale(0.845,1.05);">0x80B0</div>
<div class="t" style="left:230px;top:317px;font-size:7.4px;color:#1c1c1c;transform:translate(0.15px,0.49px) scale(0.916,1.05);">Analog Input Setting Ch.11</div>
<div class="t" style="left:353px;top:317px;font-size:7.4px;color:#1c1c1c;transform:translate(0.24px,0.49px) scale(0.805,1.05);">DT8000</div>
<div class="t" style="left:400px;top:317px;font-size:7.4px;color:#1c1c1c;transform:translate(0.58px,0.49px) scale(0.705,1.05);">12</div>
<div class="t" style="left:175px;top:330px;font-size:7.4px;color:#2e2e2e;transform:translate(0.25px,0.03px) scale(0.831,1.05);">0x80C0</div>
<div class="t" style="left:229px;top:330px;font-size:7.4px;color:#1c1c1c;transform:translate(0.87px,0.03px) scale(0.910,1.05);">Analog Input Setting Ch.12</div>
<div class="t" style="left:353px;top:330px;font-size:7.4px;color:#1c1c1c;transform:translate(0.24px,0.03px) scale(0.805,1.05);">DT8000</div>
<div class="t" style="left:400px;top:330px;font-size:7.4px;color:#1c1c1c;transform:translate(0.58px,0.03px) scale(0.705,1.05);">12</div>
<div class="t" style="left:175px;top:342px;font-size:7.4px;color:#2e2e2e;transform:translate(0.25px,0.57px) scale(0.831,1.05);">0x80D0</div>
<div class="t" style="left:229px;top:342px;font-size:7.4px;color:#1c1c1c;transform:translate(0.87px,0.57px) scale(0.910,1.05);">Analog Input Setting Ch.13</div>
<div class="t" style="left:353px;top:342px;font-size:7.4px;color:#1c1c1c;transform:translate(0.24px,0.57px) scale(0.805,1.05);">DT8000</div>
<div class="t" style="left:400px;top:342px;font-size:7.4px;color:#1c1c1c;transform:translate(0.58px,0.57px) scale(0.705,1.05);">12</div>
<div class="t" style="left:175px;top:355px;font-size:7.4px;color:#2e2e2e;transform:translate(0.45px,0.11px) scale(0.845,1.05);">0x80E0</div>
<div class="t" style="left:229px;top:355px;font-size:7.4px;color:#1c1c1c;transform:translate(0.87px,0.11px) scale(0.910,1.05);">Analog Input Setting Ch.14</div>
<div class="t" style="left:353px;top:355px;font-size:7.4px;color:#1c1c1c;transform:translate(0.24px,0.11px) scale(0.805,1.05);">DT8000</div>
<div class="t" style="left:400px;top:355px;font-size:7.4px;color:#1c1c1c;transform:translate(0.58px,0.11px) scale(0.705,1.05);">12</div>
<div class="t" style="left:175px;top:367px;font-size:7.4px;color:#2e2e2e;transform:translate(0.66px,0.65px) scale(0.859,1.05);">0x80F0</div>
<div class="t" style="left:229px;top:367px;font-size:7.4px;color:#1c1c1c;transform:translate(0.87px,0.65px) scale(0.910,1.05);">Analog Input Setting Ch.15</div>
<div class="t" style="left:353px;top:367px;font-size:7.4px;color:#1c1c1c;transform:translate(0.24px,0.65px) scale(0.805,1.05);">DT8000</div>
<div class="t" style="left:400px;top:367px;font-size:7.4px;color:#1c1c1c;transform:translate(0.58px,0.65px) scale(0.705,1.05);">12</div>
<div class="t" style="left:175px;top:380px;font-size:7.4px;color:#2e2e2e;transform:translate(0.86px,0.19px) scale(0.873,1.05);">0x8900</div>
<div class="t" style="left:258px;top:380px;font-size:7.4px;color:#1c1c1c;transform:translate(0.06px,0.19px) scale(0.882,1.05);">Device ID</div>
<div class="t" style="left:357px;top:380px;font-size:7.4px;color:#1c1c1c;transform:translate(0.77px,0.19px) scale(0.846,1.05);">UINT</div>
<div class="t" style="left:402px;top:380px;font-size:7.4px;color:#1c1c1c;transform:translate(0.64px,0.19px) scale(0.826,1.05);">2</div>
<div class="t" style="left:465px;top:380px;font-size:7.4px;color:#1c1c1c;transform:translate(0.04px,0.19px) scale(0.632,1.05);">1</div>
<div class="t" style="left:512px;top:380px;font-size:7.4px;color:#1c1c1c;transform:translate(0.03px,0.19px) scale(0.838,1.05);">0x1</div>
<div class="t" style="left:175px;top:392px;font-size:7.4px;color:#fff;transform:translate(0.46px,0.73px) scale(0.790,1.05);">0xF001</div>
<div class="t" style="left:244px;top:392px;font-size:7.4px;color:#fff;transform:translate(0.89px,0.73px) scale(0.918,1.05);">Setting Save Flag</div>
<div class="t" style="left:357px;top:392px;font-size:7.4px;color:#fff;transform:translate(0.77px,0.73px) scale(0.846,1.05);">UINT</div>
<div class="t" style="left:402px;top:392px;font-size:7.4px;color:#fff;transform:translate(0.64px,0.73px) scale(0.826,1.05);">2</div>
<div class="t" style="left:465px;top:392px;font-size:7.4px;color:#fff;transform:translate(0.04px,0.73px) scale(0.826,1.05);">0</div>
<div class="t" style="left:512px;top:392px;font-size:7.4px;color:#fff;transform:translate(0.03px,0.73px) scale(0.838,1.05);">0x0</div>
<svg class="abs" style="left:413px;top:125px;width:59px;height:17px" viewBox="413 125 59 17"><rect x="415.15" y="126.75" width="54.70" height="12.80" fill="none" stroke="#e6182c" stroke-width="1.5"/></svg>
<svg class="abs" style="left:229px;top:387px;width:89px;height:18px" viewBox="229 387 89 18"><rect x="230.75" y="388.75" width="85.50" height="14.10" fill="none" stroke="#e6182c" stroke-width="1.5"/></svg>
<svg class="abs" style="left:453px;top:387px;width:26px;height:18px" viewBox="453 387 26 18"><rect x="455.35" y="388.95" width="21.00" height="13.70" fill="none" stroke="#e6182c" stroke-width="1.5"/></svg>
</body>
</html>
